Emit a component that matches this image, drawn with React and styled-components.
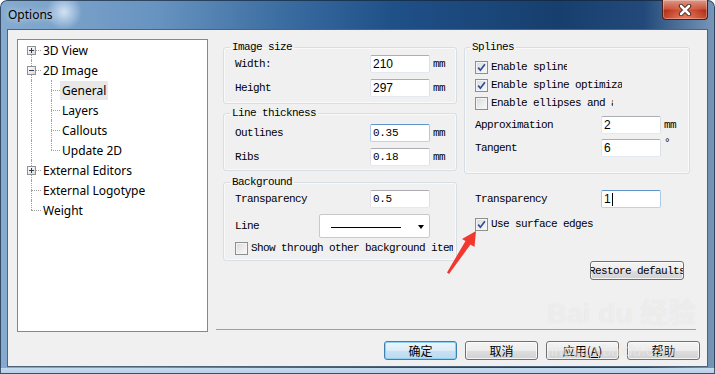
import React from 'react';
import styled, { createGlobalStyle } from 'styled-components';

const MONO = `'Liberation Mono', 'DejaVu Sans Mono', monospace`;
const UI = `'Noto Sans', 'Liberation Sans', sans-serif`;
const CJK = `'Noto Sans CJK SC', 'Noto Sans', sans-serif`;

const GlobalStyle = createGlobalStyle`
  html, body { margin: 0; padding: 0; background: #fff; }
  body { width: 715px; height: 374px; overflow: hidden; }
`;

const Window = styled.div`
  width: 715px;
  height: 374px;
  box-sizing: border-box;
  display: flex;
  flex-direction: column;
  padding: 0 7px 7px;
  border-radius: 7px 7px 0 0;
  box-shadow: inset 0 0 0 1px rgba(20, 35, 55, 0.7);
  background:
    radial-gradient(circle at 64px 12px, rgba(225, 238, 250, 0.85) 0, rgba(225, 238, 250, 0) 18px),
    linear-gradient(to top, #7d9cbd 0, #b7d0ea 1px, #c6dbef 6px, transparent 6px),
    linear-gradient(90deg, #86abd0 0%, #6793c0 22%, #3a6ca0 40%, #1f5088 55%, #173f6e 78%, #22497a 90%, #7997b8 100%);
`;

const TitleBar = styled.div`
  height: 29px;
  flex: none;
  display: flex;
  justify-content: space-between;
  padding-left: 1px;
`;

const Title = styled.span`
  font-family: ${UI};
  font-size: 12px;
  line-height: 29px;
  color: #000;
  text-shadow: 0 0 6px rgba(255, 255, 255, 0.9);
`;

const CloseBtn = styled.div`
  width: 46px;
  height: 20px;
  box-sizing: border-box;
  border: 1px solid #4b1e17;
  border-top: none;
  border-radius: 0 0 4px 4px;
  background:
    radial-gradient(ellipse at 50% 100%, rgba(240, 130, 100, 0.9) 0, rgba(240, 130, 100, 0) 70%),
    linear-gradient(#dc9a8b 0%, #c9563f 45%, #b23119 55%, #c0452c 100%);
  box-shadow: inset 0 0 0 1px rgba(255, 255, 255, 0.3);
  display: flex;
  align-items: center;
  justify-content: center;
`;

const Client = styled.div`
  flex: 1;
  position: relative;
  overflow: hidden;
  display: flex;
  flex-direction: column;
  padding: 9px 7px 0 9px;
  background: #f0f0f0;
  border: 1px solid #4e6279;
`;

const Body = styled.div`
  display: flex;
  align-items: flex-start;
  height: 293px;
  flex: none;
`;

/* ---------- tree ---------- */

const Tree = styled.div`
  width: 191px;
  height: 293px;
  box-sizing: border-box;
  flex: none;
  background: #fff;
  border: 1px solid #828790;
`;

const TreeRow = styled.div`
  display: flex;
  height: 20px;
`;

const Gutter = styled.span`
  position: relative;
  flex: none;
  width: ${({ $w }) => $w}px;
  &::before {
    content: '';
    display: ${({ $v }) => ($v ? 'block' : 'none')};
    position: absolute;
    left: ${({ $x }) => $x}px;
    top: ${({ $v }) => ($v === 'bottom' ? '10px' : '0')};
    bottom: ${({ $v }) => ($v === 'top' ? '10px' : '0')};
    border-left: 1px dotted #a0a0a0;
  }
  &::after {
    content: '';
    display: ${({ $h }) => ($h ? 'block' : 'none')};
    position: absolute;
    left: ${({ $x }) => $x}px;
    right: 0;
    top: 10px;
    border-top: 1px dotted #a0a0a0;
  }
`;

const Expander = styled.svg`
  position: absolute;
  left: ${({ $x }) => $x - 4}px;
  top: 6px;
  z-index: 1;
`;

const TreeLabel = styled.span`
  font-family: ${UI};
  font-size: 12px;
  line-height: 19px;
  height: 19px;
  margin-top: 1px;
  padding: 0 2px;
  color: #000;
  white-space: nowrap;
  background: ${({ $selected }) => ($selected ? '#e8e8e8' : 'transparent')};
`;

const L1 = { w: 23, x: 13, v: 'full' };
const sub = (v) => ({ w: 19, x: 10, v, h: true });

const treeItems = [
  { label: '3D View', lines: [{ ...L1, v: 'bottom', h: true, exp: 'plus' }] },
  { label: '2D Image', lines: [{ ...L1, h: true, exp: 'minus' }] },
  { label: 'General', selected: true, lines: [L1, sub('full')] },
  { label: 'Layers', lines: [L1, sub('full')] },
  { label: 'Callouts', lines: [L1, sub('full')] },
  { label: 'Update 2D', lines: [L1, sub('top')] },
  { label: 'External Editors', lines: [{ ...L1, h: true, exp: 'plus' }] },
  { label: 'External Logotype', lines: [{ ...L1, h: true }] },
  { label: 'Weight', lines: [{ ...L1, v: 'top', h: true }] },
];

function ExpandIcon({ x, kind }) {
  return (
    <Expander $x={x} width="9" height="9" viewBox="0 0 9 9">
      <defs>
        <linearGradient id={`eg-${kind}`} x1="0" y1="0" x2="1" y2="1">
          <stop offset="0" stopColor="#ffffff" />
          <stop offset="1" stopColor="#d8d8d8" />
        </linearGradient>
      </defs>
      <rect x="0.5" y="0.5" width="8" height="8" fill={`url(#eg-${kind})`} stroke="#919191" />
      <path d="M2 4.5H7" stroke="#2b3f5c" />
      {kind === 'plus' && <path d="M4.5 2V7" stroke="#2b3f5c" />}
    </Expander>
  );
}

/* ---------- right panel ---------- */

const Panel = styled.div`
  margin-left: 8px;
  width: 480px;
  height: 291px;
  box-sizing: border-box;
  flex: none;
  border-bottom: 1px solid #a0a0a0;
  padding: 1px 0 0 7px;
  display: flex;
  gap: 7px;
  align-items: flex-start;
`;

const Column = styled.div`
  width: ${({ $w }) => $w}px;
  display: flex;
  flex-direction: column;
`;

const Group = styled.fieldset`
  margin: ${({ $mt }) => $mt || 0}px 0 0;
  padding: 0;
  min-width: 0;
  height: ${({ $h }) => $h}px;
  box-sizing: border-box;
  border: 1px solid #d5dfe5;
  border-radius: 3px;
  box-shadow: inset 0 0 0 1px rgba(255, 255, 255, 0.6);
`;

const Legend = styled.legend`
  margin-left: ${({ $ml }) => $ml}px;
  padding: 0 2px;
  font-family: ${MONO};
  font-size: 11px;
  letter-spacing: -0.6px;
  line-height: 14px;
  color: #000;
`;

const GroupBody = styled.div`
  display: flex;
  flex-direction: column;
  gap: ${({ $gap }) => $gap}px;
  padding: ${({ $pt }) => $pt}px 0 0 ${({ $pl }) => $pl}px;
`;

const Row = styled.div`
  display: flex;
  align-items: center;
  height: ${({ $h }) => $h || 18}px;
  margin-top: ${({ $mt }) => $mt || 0}px;
  padding-left: ${({ $pl }) => $pl || 0}px;
`;

const Label = styled.span`
  flex: 1;
  font-family: ${MONO};
  font-size: 11px;
  letter-spacing: -0.6px;
  color: #000;
  white-space: nowrap;
`;

const TextBox = styled.div`
  width: 60px;
  height: 18px;
  box-sizing: border-box;
  flex: none;
  display: flex;
  align-items: center;
  padding: 0 2px;
  background: #fff;
  border: 1px solid;
  border-radius: 2px;
  border-color: ${({ $focus }) =>
    $focus ? '#5d95c9 #a9cbe9 #b7d5ef #a9cbe9' : '#abadb3 #dbdfe6 #e3e9ef #e2e3ea'};
  font-family: ${({ $sans }) => ($sans ? `'Liberation Sans', Arial, sans-serif` : MONO)};
  font-size: ${({ $sans }) => ($sans ? '12px' : '11px')};
  letter-spacing: ${({ $sans }) => ($sans ? '0' : '-0.3px')};
  color: #000;
`;

const Caret = styled.span`
  width: 1px;
  height: 13px;
  background: #000;
  margin-left: 1px;
`;

const Unit = styled.span`
  width: ${({ $w }) => $w}px;
  flex: none;
  box-sizing: border-box;
  padding-left: 3px;
  align-self: ${({ $top }) => ($top ? 'flex-start' : 'center')};
  margin-top: ${({ $top }) => ($top ? '-2px' : '0')};
  font-family: ${MONO};
  font-size: 11px;
  letter-spacing: -0.6px;
  color: #000;
`;

const Combo = styled.div`
  width: 111px;
  height: 24px;
  box-sizing: border-box;
  flex: none;
  display: flex;
  align-items: center;
  justify-content: space-between;
  padding: 2px 5px 0 11px;
  background: #fff;
  border: 1px solid #c9c9c9;
  border-radius: 2px;
`;

const ComboLine = styled.span`
  width: 70px;
  height: 1px;
  background: #000;
`;

const ComboArrow = styled.span`
  width: 0;
  height: 0;
  border-left: 3.5px solid transparent;
  border-right: 3.5px solid transparent;
  border-top: 4px solid #000;
`;

const CheckRow = styled.div`
  display: flex;
  align-items: center;
  height: 13px;
  margin-top: ${({ $mt }) => $mt || 0}px;
  padding-left: ${({ $pl }) => $pl || 0}px;
`;

const Box = styled.span`
  width: 13px;
  height: 13px;
  box-sizing: border-box;
  flex: none;
  display: flex;
  align-items: center;
  justify-content: center;
  border: 1px solid #8e8f8f;
  background: linear-gradient(135deg, #d9d9d9 0%, #eeeeee 60%, #fbfbfb 100%);
  box-shadow: inset 0 0 0 1px #f4f4f4;
`;

const CheckText = styled.span`
  width: ${({ $w }) => $w}px;
  overflow: hidden;
  margin-left: 3px;
  font-family: ${MONO};
  font-size: 11px;
  letter-spacing: -0.6px;
  line-height: 13px;
  white-space: nowrap;
  color: #000;
`;

const Btn = styled.div`
  width: ${({ $w }) => $w || 73}px;
  height: 19px;
  box-sizing: border-box;
  flex: none;
  display: flex;
  align-items: center;
  justify-content: center;
  overflow: hidden;
  white-space: nowrap;
  border: 1px solid ${({ $default }) => ($default ? '#3c7fb1' : '#707070')};
  border-radius: 3px;
  background: ${({ $default }) =>
    $default
      ? 'linear-gradient(#ecf6fc 0%, #dcecf7 50%, #c8e2f3 51%, #bcd9ee 100%)'
      : 'linear-gradient(#f4f4f4 0%, #ececec 50%, #dedede 51%, #d2d2d2 100%)'};
  box-shadow: inset 0 0 0 1px ${({ $default }) => ($default ? '#8fd0f4' : 'rgba(255,255,255,0.75)')};
  font-family: ${({ $mono }) => ($mono ? MONO : CJK)};
  font-size: ${({ $mono }) => ($mono ? '11px' : '12px')};
  letter-spacing: ${({ $mono }) => ($mono ? '-0.6px' : '0')};
  color: #000;
`;

const RestoreBtn = styled(Btn)`
  align-self: flex-end;
  margin: 30px 6px 0 0;
`;

const ButtonRow = styled.div`
  display: flex;
  justify-content: flex-end;
  gap: 8px;
  margin-top: 9px;
`;

const Watermark = styled.div`
  position: absolute;
  left: 539px;
  top: 266px;
  display: flex;
  flex-direction: column;
  align-items: flex-start;
  white-space: nowrap;
  pointer-events: none;
  color: rgba(255, 255, 255, 0.55);
  text-shadow: 0 0 1px rgba(0, 0, 0, 0.1);
`;

const WaterBig = styled.span`
  font-family: 'Liberation Sans', ${CJK};
  font-size: 28px;
  font-weight: bold;
  line-height: 36px;
`;

const WaterSmall = styled.span`
  font-family: 'Liberation Sans', sans-serif;
  font-size: 16px;
  line-height: 18px;
  margin-top: 10px;
`;

const Arrow = styled.svg`
  position: absolute;
  left: 430px;
  top: 196px;
`;

function Check({ checked }) {
  return (
    <Box>
      {checked && (
        <svg width="9" height="9" viewBox="0 0 9 9">
          <path d="M1.2 4.6L3.4 7.2L7.9 1.2" fill="none" stroke="#2c4e96" strokeWidth="1.7" />
        </svg>
      )}
    </Box>
  );
}

function Field({ label, value, unit, unitW, focus, sans, caret, mt, pl, top }) {
  return (
    <Row $mt={mt} $pl={pl}>
      <Label>{label}</Label>
      <TextBox $focus={focus} $sans={sans}>
        {value}
        {caret && <Caret />}
      </TextBox>
      <Unit $w={unitW} $top={top}>{unit}</Unit>
    </Row>
  );
}

export default function App() {
  return (
    <>
      <GlobalStyle />
      <Window>
        <TitleBar>
          <Title>Options</Title>
          <CloseBtn>
            <svg width="16" height="12" viewBox="0 0 16 12">
              <path d="M4 2L12 10M12 2L4 10" stroke="#3b2320" strokeWidth="4.4" strokeLinecap="round" />
              <path d="M4 2L12 10M12 2L4 10" stroke="#ffffff" strokeWidth="2.6" strokeLinecap="round" />
            </svg>
          </CloseBtn>
        </TitleBar>

        <Client>
          <Body>
            <Tree>
              {treeItems.map((item) => (
                <TreeRow key={item.label}>
                  {item.lines.map((g, i) => (
                    <Gutter key={i} $w={g.w} $x={g.x} $v={g.v} $h={g.h}>
                      {g.exp && <ExpandIcon x={g.x} kind={g.exp} />}
                    </Gutter>
                  ))}
                  <TreeLabel $selected={item.selected}>{item.label}</TreeLabel>
                </TreeRow>
              ))}
            </Tree>

            <Panel>
              <Column $w={234}>
                <Group $h={64}>
                  <Legend $ml={6}>Image size</Legend>
                  <GroupBody $gap={6} $pt={1} $pl={11}>
                    <Field label="Width:" value="210" unit="mm" unitW={26} sans />
                    <Field label="Height" value="297" unit="mm" unitW={26} sans />
                  </GroupBody>
                </Group>

                <Group $h={65} $mt={2}>
                  <Legend $ml={6}>Line thickness</Legend>
                  <GroupBody $gap={6} $pt={4} $pl={11}>
                    <Field label="Outlines" value="0.35" unit="mm" unitW={26} focus />
                    <Field label="Ribs" value="0.18" unit="mm" unitW={26} />
                  </GroupBody>
                </Group>

                <Group $h={86} $mt={4}>
                  <Legend $ml={6}>Background</Legend>
                  <GroupBody $gap={6} $pt={1} $pl={11}>
                    <Field label="Transparency" value="0.5" unitW={26} />
                    <Row $h={24}>
                      <Label>Line</Label>
                      <Combo>
                        <ComboLine />
                        <ComboArrow />
                      </Combo>
                      <Unit $w={26} />
                    </Row>
                    <CheckRow $mt={-2}>
                      <Check />
                      <CheckText $w={202}>Show through other background items</CheckText>
                    </CheckRow>
                  </GroupBody>
                </Group>
              </Column>

              <Column $w={226}>
                <Group $h={134}>
                  <Legend $ml={5}>Splines</Legend>
                  <GroupBody $gap={5} $pt={7} $pl={10}>
                    <CheckRow>
                      <Check checked />
                      <CheckText $w={76}>Enable spline</CheckText>
                    </CheckRow>
                    <CheckRow>
                      <Check checked />
                      <CheckText $w={131}>Enable spline optimization</CheckText>
                    </CheckRow>
                    <CheckRow>
                      <Check />
                      <CheckText $w={122}>Enable ellipses and arcs</CheckText>
                    </CheckRow>
                    <Field label="Approximation" value="2" unit="mm" unitW={28} sans mt={1} />
                    <Field label="Tangent" value="6" unit="°" unitW={28} sans top />
                  </GroupBody>
                </Group>

                <Field label="Transparency" value="1" unitW={29} pl={11} mt={16} sans focus caret />
                <CheckRow $mt={10} $pl={11}>
                  <Check checked />
                  <CheckText $w={150}>Use surface edges</CheckText>
                </CheckRow>
                <RestoreBtn $w={94} $mono>Restore defaults</RestoreBtn>
              </Column>
            </Panel>
          </Body>

          <ButtonRow>
            <Btn $default>确定</Btn>
            <Btn>取消</Btn>
            <Btn>
              应用(<u>A</u>)
            </Btn>
            <Btn>帮助</Btn>
          </ButtonRow>

          <Watermark>
            <WaterBig>Bai du 经验</WaterBig>
            <WaterSmall>jingyan.baidu.com</WaterSmall>
          </Watermark>

          <Arrow width="52" height="56" viewBox="438 226 52 56">
            <polygon
              points="476,231 474.5,247 470.5,244.5 449,274 447,272.5 465.5,241 462,239"
              fill="#f2372f"
            />
          </Arrow>
        </Client>
      </Window>
    </>
  );
}
